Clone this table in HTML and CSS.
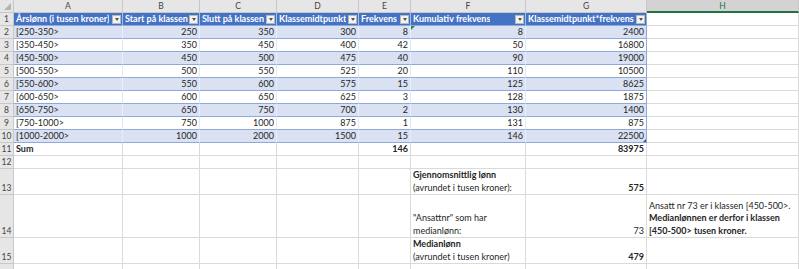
FILE: index.html
```html
<!DOCTYPE html>
<html lang="no">
<head>
<meta charset="utf-8">
<title>Lønnsfordeling</title>
<link rel="stylesheet" href="styles.css">
</head>
<body>
<div class="sheet">
  <!-- column headers -->
  <div class="corner"><span class="corner-tri"></span></div>
  <div class="ch">A</div><div class="ch">B</div><div class="ch">C</div><div class="ch">D</div><div class="ch">E</div><div class="ch">F</div><div class="ch">G</div><div class="ch ch-active">H</div>

  <!-- row 1 -->
  <div class="rh">1</div>
  <div class="c th"><span class="tt">Årslønn (i tusen kroner)</span><span class="flt"></span></div>
  <div class="c th"><span class="tt">Start på klassen</span><span class="flt"></span></div>
  <div class="c th"><span class="tt">Slutt på klassen</span><span class="flt"></span></div>
  <div class="c th"><span class="tt">Klassemidtpunkt</span><span class="flt"></span></div>
  <div class="c th"><span class="tt">Frekvens</span><span class="flt"></span></div>
  <div class="c th"><span class="tt">Kumulativ frekvens</span><span class="flt"></span></div>
  <div class="c th last"><span class="tt">Klassemidtpunkt*frekvens</span><span class="flt"></span></div>
  <div class="c"></div>

  <!-- row 2 -->
  <div class="rh">2</div>
  <div class="c b">[250-350&gt;</div><div class="c b r">250</div><div class="c b r">350</div><div class="c b r">300</div><div class="c b r">8</div><div class="c b r"><span class="err"></span>8</div><div class="c b r last">2400</div><div class="c"></div>
  <!-- row 3 -->
  <div class="rh">3</div>
  <div class="c w">[350-450&gt;</div><div class="c w r">350</div><div class="c w r">450</div><div class="c w r">400</div><div class="c w r">42</div><div class="c w r">50</div><div class="c w r last">16800</div><div class="c"></div>
  <!-- row 4 -->
  <div class="rh">4</div>
  <div class="c b">[450-500&gt;</div><div class="c b r">450</div><div class="c b r">500</div><div class="c b r">475</div><div class="c b r">40</div><div class="c b r">90</div><div class="c b r last">19000</div><div class="c"></div>
  <!-- row 5 -->
  <div class="rh">5</div>
  <div class="c w">[500-550&gt;</div><div class="c w r">500</div><div class="c w r">550</div><div class="c w r">525</div><div class="c w r">20</div><div class="c w r">110</div><div class="c w r last">10500</div><div class="c"></div>
  <!-- row 6 -->
  <div class="rh">6</div>
  <div class="c b">[550-600&gt;</div><div class="c b r">550</div><div class="c b r">600</div><div class="c b r">575</div><div class="c b r">15</div><div class="c b r">125</div><div class="c b r last">8625</div><div class="c"></div>
  <!-- row 7 -->
  <div class="rh">7</div>
  <div class="c w">[600-650&gt;</div><div class="c w r">600</div><div class="c w r">650</div><div class="c w r">625</div><div class="c w r">3</div><div class="c w r">128</div><div class="c w r last">1875</div><div class="c"></div>
  <!-- row 8 -->
  <div class="rh">8</div>
  <div class="c b">[650-750&gt;</div><div class="c b r">650</div><div class="c b r">750</div><div class="c b r">700</div><div class="c b r">2</div><div class="c b r">130</div><div class="c b r last">1400</div><div class="c"></div>
  <!-- row 9 -->
  <div class="rh">9</div>
  <div class="c w">[750-1000&gt;</div><div class="c w r">750</div><div class="c w r">1000</div><div class="c w r">875</div><div class="c w r">1</div><div class="c w r">131</div><div class="c w r last">875</div><div class="c"></div>
  <!-- row 10 -->
  <div class="rh">10</div>
  <div class="c b">[1000-2000&gt;</div><div class="c b r">1000</div><div class="c b r">2000</div><div class="c b r">1500</div><div class="c b r">15</div><div class="c b r">146</div><div class="c b r last">22500<span class="handle"></span></div><div class="c"></div>
  <!-- row 11 -->
  <div class="rh">11</div>
  <div class="c bold">Sum</div><div class="c"></div><div class="c"></div><div class="c"></div><div class="c r bold">146</div><div class="c"></div><div class="c r bold">83975</div><div class="c"></div>
  <!-- row 12 -->
  <div class="rh">12</div>
  <div class="c"></div><div class="c"></div><div class="c"></div><div class="c"></div><div class="c"></div><div class="c"></div><div class="c"></div><div class="c"></div>
  <!-- row 13 -->
  <div class="rh">13</div>
  <div class="c"></div><div class="c"></div><div class="c"></div><div class="c"></div><div class="c"></div>
  <div class="c wrap"><span class="ln bold">Gjennomsnittlig lønn</span><span class="ln">(avrundet i tusen kroner):</span></div>
  <div class="c r bold">575</div><div class="c"></div>
  <!-- row 14 -->
  <div class="rh">14</div>
  <div class="c"></div><div class="c"></div><div class="c"></div><div class="c"></div><div class="c"></div>
  <div class="c wrap"><span class="ln">"Ansattnr" som har</span><span class="ln">medianlønn:</span></div>
  <div class="c r">73</div>
  <div class="c wrap"><span class="ln">Ansatt nr 73 er i klassen [450-500&gt;.</span><span class="ln bold">Medianlønnen er derfor i klassen</span><span class="ln bold">[450-500&gt; tusen kroner.</span></div>
  <!-- row 15 -->
  <div class="rh">15</div>
  <div class="c"></div><div class="c"></div><div class="c"></div><div class="c"></div><div class="c"></div>
  <div class="c wrap"><span class="ln bold">Medianlønn</span><span class="ln">(avrundet i tusen kroner)</span></div>
  <div class="c r bold">479</div><div class="c"></div>
  <!-- row 16 (only its top edge is in view) -->
  <div class="rh"></div>
  <div class="c"></div><div class="c"></div><div class="c"></div><div class="c"></div><div class="c"></div><div class="c"></div><div class="c"></div><div class="c"></div>
</div>
</body>
</html>
```
FILE: styles.css
```css
html, body {
  margin: 0;
  padding: 0;
  background: #ffffff;
  overflow: hidden;
}

.sheet {
  display: grid;
  grid-template-columns: 14px 109px 77px 77px 82px 52px 115px 121px 152px;
  grid-template-rows: 13px repeat(12, 13px) 26px 43px 26px 13px;
  width: 799px;
  height: 269px;
  overflow: hidden;
  font-family: Lato, "Open Sans", "Liberation Sans", sans-serif;
  font-size: 9px;
  color: #262626;
}

.sheet > div {
  box-sizing: border-box;
  position: relative;
  white-space: nowrap;
}

.corner {
  background: #e6e6e6;
  border-right: 1px solid #c8c8c8;
  border-bottom: 1px solid #c8c8c8;
}

.corner-tri {
  position: absolute;
  right: 2px;
  bottom: 2px;
  width: 0;
  height: 0;
  border-left: 7px solid transparent;
  border-bottom: 7px solid #b4b4b4;
}

.ch {
  background: #e6e6e6;
  color: #444444;
  border-right: 1px solid #c8c8c8;
  border-bottom: 1px solid #c8c8c8;
  display: flex;
  align-items: center;
  justify-content: center;
  font-size: 8.5px;
  line-height: 12px;
}

.ch-active {
  background: #d3d3d3;
  color: #217346;
  border-bottom: 2px solid #217346;
}

.rh {
  background: #e6e6e6;
  color: #444444;
  border-right: 1px solid #c8c8c8;
  border-bottom: 1px solid #c8c8c8;
  display: flex;
  align-items: flex-end;
  justify-content: center;
  font-size: 8.5px;
  line-height: 12px;
}

.c {
  border-right: 1px solid #dadada;
  border-bottom: 1px solid #dadada;
  display: flex;
  align-items: flex-end;
  padding: 0 2px;
  line-height: 12px;
}

.r {
  justify-content: flex-end;
}

.bold {
  font-weight: 700;
}

.wrap {
  flex-direction: column;
  justify-content: flex-end;
  align-items: flex-start;
  line-height: 12.5px;
}

.ln {
  display: block;
}

.th {
  background: #4472c4;
  color: #ffffff;
  font-weight: 700;
  border-right: 1px solid #a9bfe6;
  border-bottom: 1px solid #8eaadb;
  justify-content: space-between;
  align-items: center;
  padding-right: 1px;
}

.tt {
  overflow: hidden;
}

.flt {
  flex: none;
  width: 9px;
  height: 9px;
  box-sizing: border-box;
  background: #f2f2f2;
  border: 1px solid #b8b8b8;
  position: relative;
}

.flt::after {
  content: "";
  position: absolute;
  left: 1.5px;
  top: 2.5px;
  border-left: 2.5px solid transparent;
  border-right: 2.5px solid transparent;
  border-top: 3px solid #555555;
}

.b {
  background: #d9e1f2;
  border-right: 1px solid #e9eef8;
  border-bottom: 1px solid #8eaadb;
}

.w {
  background: #ffffff;
  border-right: 1px solid #e4e8f0;
  border-bottom: 1px solid #8eaadb;
}

.last {
  border-right: 1px solid #8eaadb;
}

.err {
  position: absolute;
  left: 0;
  top: 0;
  width: 0;
  height: 0;
  border-top: 4px solid #2a8c3c;
  border-right: 4px solid transparent;
}

.handle {
  position: absolute;
  right: 0;
  bottom: 0;
  width: 0;
  height: 0;
  border-left: 3px solid transparent;
  border-bottom: 3px solid #2f5597;
}
```
